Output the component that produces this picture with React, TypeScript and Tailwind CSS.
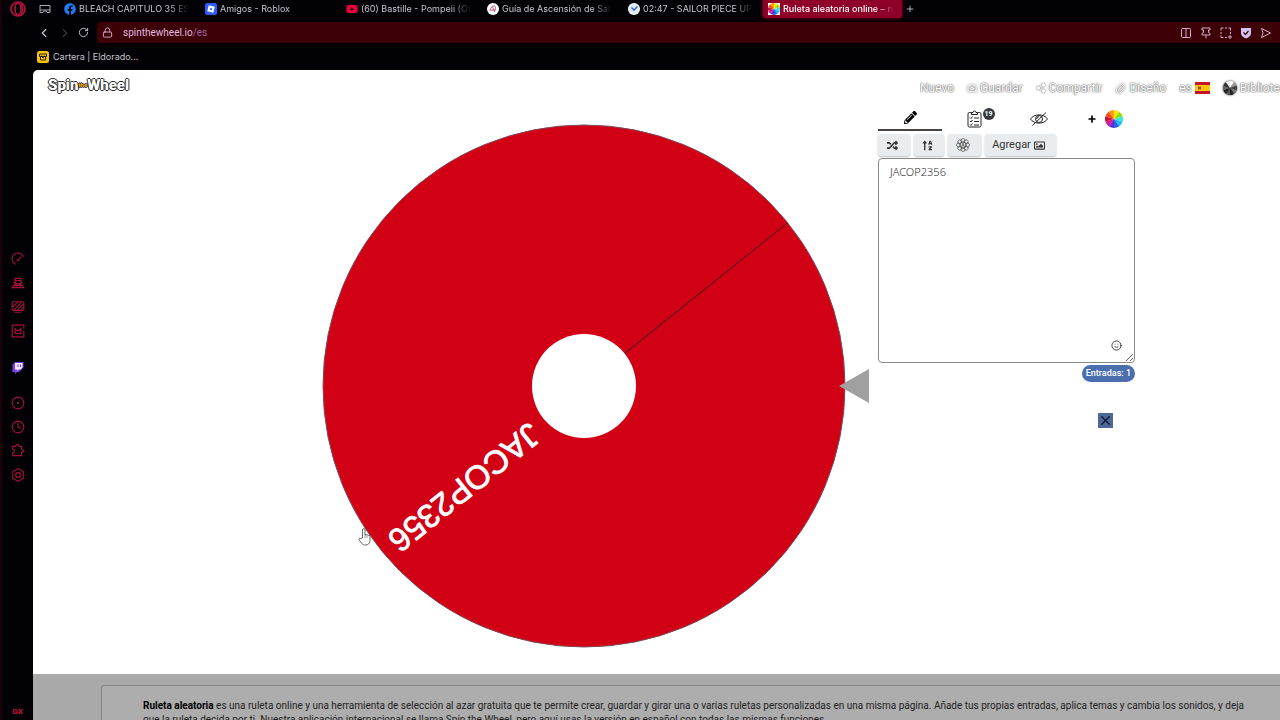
import { ReactNode } from 'react'
import {
  Plus, Lock, RotateCw, ChevronLeft, ChevronRight, Columns2,
  Clock, CircleDot, Camera, Share2, Paperclip, Smile, X
} from 'lucide-react'
import { FaFacebook, FaYoutube, FaPencilAlt, FaRandom, FaRegImage, FaSortAlphaUp } from 'react-icons/fa'

const SLICES = ['#ffe600', '#8ee000', '#3ce8d0', '#25b7ff', '#2067e8', '#6b2bd0', '#d3169a', '#c8143c', '#ff4a12', '#ff9c10']
const GREYS = ['#ffffff', '#999999', '#444444', '#777777', '#222222', '#555555', '#222222', '#666666', '#333333', '#eeeeee']

function MiniWheel({ size, colors }: { size: number; colors: string[] }) {
  const step = (Math.PI * 2) / colors.length
  return (
    <svg width={size} height={size} viewBox="-10 -10 20 20" className="shrink-0">
      {colors.map((color, i) => {
        const a = i * step - Math.PI / 2
        const b = a + step
        return (
          <path
            key={i}
            d={`M0 0L${10 * Math.cos(a)} ${10 * Math.sin(a)}A10 10 0 0 1 ${10 * Math.cos(b)} ${10 * Math.sin(b)}Z`}
            fill={color}
          />
        )
      })}
    </svg>
  )
}

function RobloxIcon() {
  return (
    <svg width="12" height="12" viewBox="0 0 24 24" className="shrink-0">
      <rect width="24" height="24" rx="5" fill="#2f5cff" />
      <path d="M7.5 4.5l12 3-3 12-12-3z" fill="#fff" />
      <path d="M10.8 9.8l3.6.9-.9 3.6-3.6-.9z" fill="#2f5cff" />
    </svg>
  )
}

function GuideIcon() {
  return (
    <svg width="12" height="12" viewBox="0 0 24 24" className="shrink-0">
      <circle cx="12" cy="12" r="12" fill="#fff" />
      <path d="M6 16c1-7 5-11 9-10 4 2 2 8-1 12M8 14h8M11 8l4 8" fill="none" stroke="#b03a70" strokeWidth="1.8" />
    </svg>
  )
}

function CheckIcon() {
  return (
    <svg width="12" height="12" viewBox="0 0 24 24" className="shrink-0">
      <circle cx="12" cy="12" r="12" fill="#fff" />
      <circle cx="12" cy="12" r="9.5" fill="#dce9fb" />
      <path d="M7 9l5 5 7-7" fill="none" stroke="#2d5fb0" strokeWidth="2.5" />
    </svg>
  )
}

function OperaLogo() {
  return (
    <svg width="16" height="16" viewBox="0 0 24 24" fill="none" stroke="#b3123c">
      <circle cx="12" cy="12" r="10.5" strokeWidth="2.5" />
      <ellipse cx="12" cy="12" rx="4.5" ry="9" strokeWidth="2.5" />
      <path d="M16 4c4 3 4 13 0 16" strokeWidth="2" />
    </svg>
  )
}

function Checklist() {
  return (
    <svg width="15" height="18" viewBox="0 0 30 36" fill="none" stroke="#222" strokeWidth="2">
      <path d="M9 5H5a3 3 0 0 0-3 3v23a3 3 0 0 0 3 3h20a3 3 0 0 0 3-3V8a3 3 0 0 0-3-3h-4M9 9V5h3a3 3 0 0 1 6 0h3v4z" />
      <path d="M6 15l2 2 3-4M6 22l2 2 3-4M6 29l2 2 3-4M14 16h10M14 23h10M14 30h10" />
    </svg>
  )
}

function EyeSlash() {
  return (
    <svg width="18" height="16" viewBox="0 0 36 32" fill="none" stroke="#222" strokeWidth="2">
      <path d="M1 16C8 5 28 5 35 16C28 27 8 27 1 16Z" />
      <circle cx="18" cy="16" r="7" />
      <path d="M13.5 16a4.5 4.5 0 0 1 4.5-4.5M5 29L32 3" />
    </svg>
  )
}

function FlowerBadge() {
  return (
    <svg width="14" height="14" viewBox="-14 -14 28 28" fill="none" stroke="#555" strokeWidth="1.5">
      {[0, 45, 90, 135, 180, 225, 270, 315].map((deg) => (
        <circle key={deg} r="4" cy="-9" transform={`rotate(${deg})`} />
      ))}
      <circle r="6.5" />
      <path d="M-3 4L0-4L3 4M-2 1.5h4" />
    </svg>
  )
}

function SpainFlag() {
  return (
    <svg width="15" height="12" viewBox="0 0 30 24" className="shrink-0">
      <path d="M0 0h30v24H0z" fill="#c8141e" />
      <path d="M0 6h30v12H0z" fill="#ffc400" />
      <path d="M6 9h6v6H6z" fill="#a0522d" />
    </svg>
  )
}

interface TabProps {
  icon: ReactNode
  label: string
  active?: boolean
}

function BrowserTab({ icon, label, active }: TabProps) {
  return (
    <button
      className={`flex h-[18px] shrink-0 items-center gap-[3px] ${
        active ? '-ml-[6px] w-[139px] rounded-b-[3px] bg-[#8f0029] pr-2 pl-[5px] font-medium text-white shadow-[0_0_4px_#8f0029]' : 'w-[141px] pr-4 text-[#c9c4cf]'
      }`}
    >
      {icon}
      <span className="min-w-0 flex-1 overflow-hidden text-left whitespace-nowrap [mask-image:linear-gradient(to_right,black_82%,transparent)]">
        {label}
      </span>
    </button>
  )
}

function Sidebar() {
  return (
    <aside className="flex w-[33px] shrink-0 flex-col items-center border-l-2 border-[#1c000a] text-[#a3123a]">
      <div className="flex h-[244px] items-start pt-px">
        <OperaLogo />
      </div>
      <nav className="flex flex-1 flex-col items-center gap-[10px] pt-2">
        <button aria-label="Control GX">
          <svg width="14" height="14" viewBox="0 0 24 24" fill="none" stroke="currentColor" strokeWidth="2">
            <path d="M8 21A10 10 0 1 1 21 8M12 13l6-5M10 13a2 2 0 1 0 4 0" />
          </svg>
        </button>
        <button aria-label="Mods">
          <svg width="14" height="14" viewBox="0 0 24 24" fill="none" stroke="currentColor" strokeWidth="2">
            <path d="M7 4h10v9H7zM7 8h10M4 11h3v5h10v-5h3M2 20l3-4h14l3 4zM9 13v7M15 13v7" />
          </svg>
        </button>
        <button aria-label="Fondos">
          <svg width="14" height="14" viewBox="0 0 24 24" fill="none" stroke="currentColor" strokeWidth="2">
            <rect x="2" y="3" width="20" height="15" rx="2" />
            <path d="M3 12l8-8M5 17L18 4M11 17l10-10M17 17l4-4M6 21h12" />
          </svg>
        </button>
        <button aria-label="Mercado">
          <svg width="14" height="14" viewBox="0 0 24 24" fill="none" stroke="currentColor" strokeWidth="2">
            <path d="M22 8V2H2v20h20V12M7 16V8l5 4 5-4v8z" />
          </svg>
        </button>
        <button aria-label="Twitch" className="mt-[14px] mb-3">
          <svg width="12" height="12" viewBox="0 0 24 24">
            <path d="M6 0L1 5v15h5v4l4-4h4l9-9V0z" fill="#7b3ff2" />
            <path d="M6 2h15v9l-4 4h-4l-3 3v-3H6z" fill="#efe6ff" />
            <path d="M12 5v5M17 5v5" stroke="#7b3ff2" strokeWidth="2" />
          </svg>
        </button>
        <button aria-label="Reproductor">
          <CircleDot size={14} />
        </button>
        <button aria-label="Historial">
          <Clock size={14} />
        </button>
        <button aria-label="Extensiones">
          <svg width="14" height="14" viewBox="0 0 24 24" fill="none" stroke="currentColor" strokeWidth="2">
            <path d="M3 4h5a3 3 0 0 1 6 0h4v5l4 3-4 3v5H3v-5a3 3 0 0 0 0-6z" />
          </svg>
        </button>
        <button aria-label="Ajustes">
          <svg width="14" height="14" viewBox="0 0 24 24" fill="none" stroke="currentColor" strokeWidth="2">
            <path d="M12 1l3 2 6 3v6 6l-6 3-3 2-3-2-6-3V6l6-3z" />
            <circle cx="12" cy="12" r="4" />
          </svg>
        </button>
      </nav>
      <span className="pb-[2px] text-[8px] leading-3 font-bold text-[#d0103c]">GX</span>
    </aside>
  )
}

function AddressBar() {
  return (
    <div className="flex h-[21px] items-center">
      <div className="flex w-16 shrink-0 items-center justify-between pr-2 pl-1 text-[#d0c8d8]">
        <button aria-label="Atrás"><ChevronLeft size={14} /></button>
        <button aria-label="Adelante" className="text-[#3a363e]"><ChevronRight size={14} /></button>
        <button aria-label="Recargar"><RotateCw size={11} /></button>
      </div>
      <div className="flex h-full flex-1 items-center rounded-l-[3px] bg-[#3d0006] pr-2 pl-[5px] text-[#d9a9cf]">
        <Lock size={11} />
        <button className="flex-1 pl-[10px] text-left font-['Roboto',sans-serif] text-[10px] text-[#e3bde0]">
          spinthewheel.io<span className="text-[#a262b0]">/es</span>
        </button>
        <div className="flex items-center gap-2">
          <button aria-label="Dividir"><Columns2 size={12} /></button>
          <button aria-label="Fijar">
            <svg width="12" height="12" viewBox="0 0 24 24" fill="none" stroke="currentColor" strokeWidth="2">
              <path d="M4 2h16v4h-3v5l3 2v3H4v-3l3-2V6H4zM12 16v7" />
            </svg>
          </button>
          <button aria-label="Captura">
            <svg width="12" height="12" viewBox="0 0 24 24" fill="none" stroke="currentColor" strokeWidth="2">
              <path d="M2 7V2h5M10 2h4M17 2h4v5M2 10v4M2 17v4h5M10 21h4M21 10v4M20 16v8M16 20h8" />
            </svg>
          </button>
          <button aria-label="Bloqueador">
            <svg width="12" height="12" viewBox="0 0 24 24">
              <path d="M2 2h20v10c0 6-5 9-10 11C7 21 2 18 2 12z" fill="#d3c3f5" />
              <path d="M7 11l4 4 6-7" fill="none" stroke="#3d0006" strokeWidth="2.5" />
            </svg>
          </button>
          <button aria-label="Enviar">
            <svg width="12" height="12" viewBox="0 0 24 24" fill="none" stroke="currentColor" strokeWidth="2">
              <path d="M3 3l18 9-18 9 3-9z" />
            </svg>
          </button>
        </div>
      </div>
    </div>
  )
}

function BrowserChrome() {
  return (
    <header className="h-[70px] shrink-0 font-['Inter',sans-serif] text-[9px]">
      <div className="flex h-[22px] items-start">
        <button aria-label="Espacios" className="flex h-[18px] w-[31px] shrink-0 items-center pl-[6px] text-[#b0a8b8]">
          <svg width="12" height="10" viewBox="0 0 24 20" fill="none" stroke="currentColor" strokeWidth="2">
            <path d="M2 12V3h20v9M2 12h20v5h-6l-2-3h-4l-2 3H2z" />
          </svg>
        </button>
        <BrowserTab icon={<FaFacebook size={12} className="shrink-0 text-[#1f7bf2]" />} label="BLEACH CAPITULO 35 ESP" />
        <BrowserTab icon={<RobloxIcon />} label="Amigos - Roblox" />
        <BrowserTab icon={<FaYoutube size={12} className="shrink-0 text-[#e8003a]" />} label="(60) Bastille - Pompeii (Of" />
        <BrowserTab icon={<GuideIcon />} label="Guía de Ascensión de Sail" />
        <BrowserTab icon={<CheckIcon />} label="02:47 - SAILOR PIECE UPD" />
        <BrowserTab
          active
          icon={<span className="shrink-0 bg-white"><MiniWheel size={12} colors={SLICES} /></span>}
          label="Ruleta aleatoria online – rul"
        />
        <button aria-label="Nueva pestaña" className="flex h-[18px] w-4 items-center justify-center text-[#d0c8d8]">
          <Plus size={10} />
        </button>
      </div>
      <AddressBar />
      <div className="flex h-[27px] items-center gap-1 pl-1">
        <a href="#" className="flex items-center gap-1 text-[#c9c4cf]">
          <svg width="12" height="12" viewBox="0 0 24 24">
            <rect width="24" height="24" rx="5" fill="#ffc400" />
            <path d="M5 6h14v5H5zM7 11v7h10v-7M9 9l3 5 3-5" fill="none" stroke="#222" strokeWidth="2" />
          </svg>
          Cartera | Eldorado...
        </a>
      </div>
    </header>
  )
}

function NavLink({ icon, label, after }: { icon?: ReactNode; label: string; after?: ReactNode }) {
  return (
    <a href="#" className="flex shrink-0 items-center gap-[3px]">
      {icon && <span className="drop-shadow-[0_0_1px_#333]">{icon}</span>}
      <span className="[text-shadow:0_0_2px_#555,0_0_1px_#666]">{label}</span>
      {after}
    </a>
  )
}

function SiteHeader() {
  return (
    <div className="flex h-9 items-center justify-between pl-[15px]">
      <a
        href="#"
        className="mb-[6px] flex items-center text-[15px] leading-4 font-black text-white [text-shadow:1px_0_#222,-1px_0_#222,0_1px_#222,0_-1px_#222]"
      >
        Spin
        <span className="text-[6px] text-[#f5b000]">the</span>
        Wheel
      </a>
      <nav className="flex w-[360px] shrink-0 items-center gap-[13px] overflow-hidden text-[12px] whitespace-nowrap text-white">
        <NavLink label="Nuevo" />
        <NavLink icon={<Camera size={10} />} label="Guardar" />
        <NavLink icon={<Share2 size={10} fill="currentColor" />} label="Compartir" />
        <NavLink icon={<Paperclip size={11} />} label="Diseño" />
        <NavLink label="es" after={<SpainFlag />} />
        <NavLink icon={<MiniWheel size={14} colors={GREYS} />} label="Biblioteca" />
      </nav>
    </div>
  )
}

// the wheel is centred on 0,0 so slices and text only need a rotation
function Wheel() {
  return (
    <svg width="547" height="524" viewBox="-262 -262 547 524" className="font-['Liberation_Sans',sans-serif]">
      <circle r="261" fill="#d20015" stroke="#7c4a58" />
      <path d="M0 0H261" stroke="#5a1a14" transform="rotate(-38.7)" />
      <text x="65" y="7" fontSize="33" fill="#fff" stroke="#fff" strokeWidth="0.8" transform="rotate(141.300)">JACOP2356</text>
      <circle r="52" fill="#fff" />
      <path d="M255 0L285-17V17Z" fill="#a0a0a0" />
    </svg>
  )
}

function ToolButton({ label, className, children }: { label: string; className: string; children: ReactNode }) {
  return (
    <button
      aria-label={label}
      className={`flex items-center justify-center gap-[3px] rounded-[3px] bg-[#e9ecef] pr-1 text-[11px] text-[#333] shadow-[0_1px_2px_#bbb] ${className}`}
    >
      {children}
    </button>
  )
}

function EntriesPanel() {
  return (
    <section className="w-[257px]">
      <div className="grid h-[25px] grid-cols-4 text-black">
        <button aria-label="Editar" className="flex items-center justify-center border-b-2 border-[#444]">
          <FaPencilAlt size={13} />
        </button>
        <button aria-label="Resultados" className="relative flex items-center justify-center">
          <Checklist />
          <span className="absolute top-[2px] right-3 flex h-3 w-3 items-center justify-center rounded-full bg-[#343a40] text-[7px] font-bold text-white">
            19
          </span>
        </button>
        <button aria-label="Ocultar" className="flex items-center justify-center">
          <EyeSlash />
        </button>
        <button aria-label="Agregar ruleta" className="flex items-center justify-center gap-2 pl-[5px]">
          <Plus size={10} strokeWidth={4} />
          <MiniWheel size={18} colors={SLICES} />
        </button>
      </div>
      <div className="mt-[3px] mb-[2px] flex h-[22px] gap-1">
        <ToolButton label="Mezclar" className="w-8"><FaRandom size={11} /></ToolButton>
        <ToolButton label="Ordenar" className="w-[30px]"><FaSortAlphaUp size={11} /></ToolButton>
        <ToolButton label="Avanzado" className="w-[33px]"><FlowerBadge /></ToolButton>
        <ToolButton label="Agregar imagen" className="w-[71px]">
          Agregar <FaRegImage size={11} />
        </ToolButton>
      </div>
      <div className="relative">
        <textarea
          aria-label="Entradas"
          defaultValue="JACOP2356"
          className="block h-[205px] w-full rounded-[4px] border border-[#8a8a8a] bg-white px-[11px] py-[5px] font-['Noto_Sans',sans-serif] text-[11px] leading-4 font-light text-[#333]"
        />
        <button aria-label="Emojis" className="absolute right-[13px] bottom-3 text-[#333]">
          <Smile size={11} />
        </button>
      </div>
      <div className="flex justify-end pt-[2px]">
        <span className="rounded-full bg-[#4a6eae] px-1 text-[9px] leading-[17px] font-medium text-white">
          Entradas: 1
        </span>
      </div>
      <div className="mt-[31px] flex justify-end pr-[22px]">
        <button aria-label="Cerrar" className="bg-[#4d6796] text-[#0a1430]">
          <X size={15} />
        </button>
      </div>
    </section>
  )
}

function HandCursor() {
  return (
    <svg width="13" height="18" viewBox="0 0 26 36" className="absolute top-[458px] left-[325px]">
      <path
        d="M9 20V4q0-3 2.500-3T14 4v10q2-2 4 0 2-1 3 1 3-1 3 2v8c0 6-4 9-9 9-6 0-8-3-13-11q0-4 4-2z"
        fill="#fff"
        stroke="#333"
        strokeWidth="1.500"
      />
      <path d="M14 14v6M18 15v5" stroke="#333" />
    </svg>
  )
}

export default function App() {
  return (
    <div className="flex h-screen overflow-hidden bg-[#020105] font-['Roboto',sans-serif]">
      <Sidebar />
      <div className="flex min-w-0 flex-1 flex-col">
        <BrowserChrome />
        <main className="relative flex-1 overflow-hidden rounded-tl-[5px] bg-white">
          <SiteHeader />
          <div className="grid grid-cols-[1fr_402px] pb-[26px]">
            <div className="flex justify-end pt-[18px] pr-[9px]">
              <Wheel />
            </div>
            <EntriesPanel />
          </div>
          <HandCursor />
          <footer className="bg-[#a9a9a9] pt-[11px] pl-[68px]">
            <article className="rounded-tl-[3px] border-t border-l border-[#858585] bg-[#adadad] pt-[13px] pr-6 pb-4 pl-[41px] text-[10px] leading-[14px] text-[#222]">
              <strong className="text-black">Ruleta aleatoria</strong> es una ruleta online y una herramienta de selección al azar gratuita que te
              permite crear, guardar y girar una o varias ruletas personalizadas en una misma página. Añade tus propias entradas, aplica
              temas y cambia los sonidos, y deja que la ruleta decida por ti. Nuestra aplicación internacional se llama Spin the Wheel, pero
              aquí usas la versión en español con todas las mismas funciones.
            </article>
          </footer>
        </main>
      </div>
    </div>
  )
}
